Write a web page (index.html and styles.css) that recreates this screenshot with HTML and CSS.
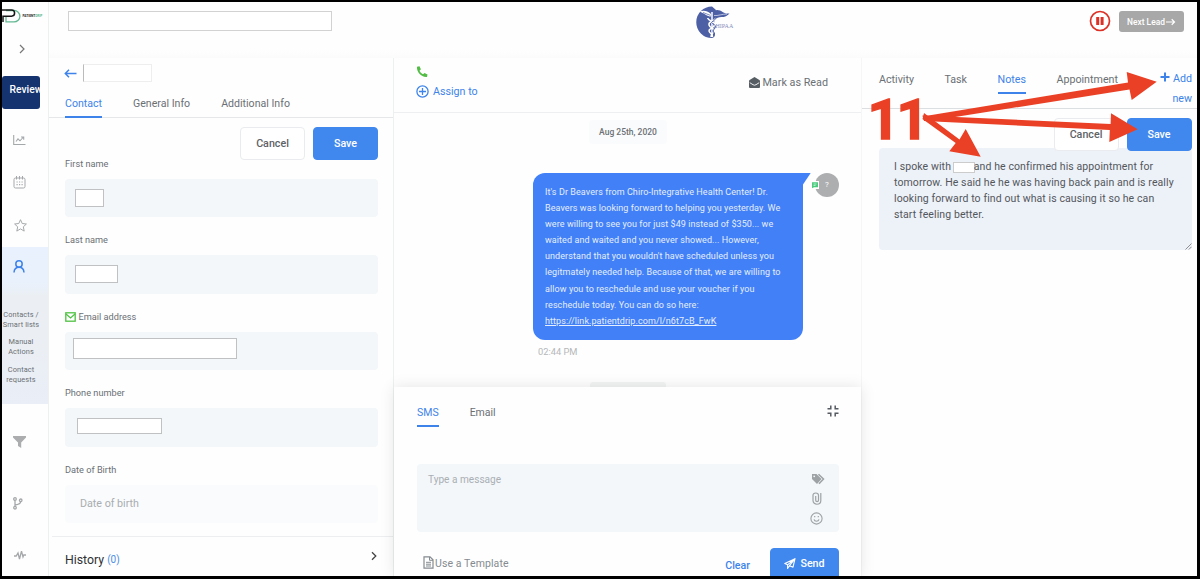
FILE: index.html
```html
<!DOCTYPE html>
<html lang="en">
<head>
<meta charset="utf-8">
<title>Contact conversation</title>
<link rel="stylesheet" href="styles.css">
</head>
<body>
<div class="window">
  <aside class="sidebar">
    <div class="brand">
      <svg width="41" height="16" viewBox="0 0 41 16"><path d="M4 2.500H12a5.900 5.700 0 0 1 0 11.400H4V8" fill="none" stroke="#63b892" stroke-width="1.300"/><path d="M0 2H9.500a3 3 0 0 1 0 6.200H1V14" fill="none" stroke="#161616" stroke-width="1.500"/><text class="brand-text" x="20.500" y="9.400">PATIENT<tspan fill="#58b58c">DRIP</tspan></text></svg>
    </div>
    <div class="nav expand"><svg width="8" height="10" viewBox="0 0 8 10"><path d="M2 1l4 4-4 4" fill="none" stroke="#777" stroke-width="1.200"/></svg></div>
    <div class="review">Review</div>
    <div class="nav chart"><svg width="13" height="11" viewBox="0 0 13 11" fill="none" stroke="#a5a8aa" stroke-width="1.100"><path d="M.7 0v9.500H12.500M3 6.500L5 3.800l2 2L10.500 2M8 2h2.700v2.700"/></svg></div>
    <div class="nav calendar"><svg width="13" height="13" viewBox="0 0 13 13" fill="none" stroke="#a5a8aa" stroke-width="1"><rect x="1" y="2" width="11" height="10" rx="1.500"/><path d="M3.500 0v3.500M6.500 0v3.500M9.500 0v3.500"/><path d="M3.500 6h6.500M3.500 8.700h6.500" stroke-dasharray="1.200 1.300" stroke-width="1.200"/></svg></div>
    <div class="nav star"><svg width="13" height="13" viewBox="0 0 13 13"><path d="M6.500 .7l1.700 3.800 4.200.5-3.100 2.800.9 4.300-3.700-2.200-3.700 2.200.9-4.300L.6 5l4.200-.5z" fill="none" stroke="#a5a8aa" stroke-linejoin="round"/></svg></div>
    <div class="section">
      <svg class="person" width="12" height="13" viewBox="0 0 12 13" fill="none" stroke="#3d83ea" stroke-width="1.500"><circle cx="6" cy="4" r="3.200"/><path d="M1 12.500C1.200 9.500 3 7.300 6 7.300s4.800 2.200 5 5.200"/></svg>
      <a>Contacts /<br>Smart lists</a>
      <a>Manual<br>Actions</a>
      <a>Contact<br>requests</a>
    </div>
    <div class="nav funnel"><svg width="13" height="12" viewBox="0 0 13 12"><path d="M0 0h13v1.500L8.200 6.500V12L5 10V6.500L0 1.500z" fill="#abadaf"/></svg></div>
    <div class="nav branch"><svg width="10" height="13" viewBox="0 0 10 13" fill="none" stroke="#a5a8aa" stroke-width="1.300"><circle cx="2" cy="2" r="1.300"/><circle cx="2" cy="10.700" r="1.300"/><circle cx="7.700" cy="3.300" r="1.300"/><path d="M2 3.500v6M7.700 4.800c0 2.200-2 2.700-5.700 3.200"/></svg></div>
    <div class="nav pulse"><svg width="12" height="11" viewBox="0 0 12 11"><path d="M0 6h2.200L4 3l1.500 6L7.500 1.200 9 7l.8-2H12" fill="none" stroke="#a5a8aa" stroke-width="1.300"/></svg></div>
  </aside>

  <div class="main">
    <header class="topbar">
      <div class="blank search"></div>
      <svg class="hipaa" width="40" height="33" viewBox="0 0 40 33"><path d="M16 .5A15.700 15.700 0 0 0 16 32c2-.3 3-1.500 3-4l-1-17 2-7z" fill="#4d5fa5"/><path d="M16 7c3-4 7-3.500 11-.8 2 1.300 4 1.500 6.500 1.200-2 2.500-5 3.600-8 3.600-3 .2-5 1-7 3z" fill="#4d5fa5"/><path d="M15 8C11 4.500 7 3.800 3.500 5.800c3 .3 4.500 3 11 5" fill="#fff"/><path d="M7 6.500l7 2.700" stroke="#4d5fa5" stroke-width=".7"/><path d="M16 6v25" stroke="#fff" stroke-width="1.500"/><path d="M11.500 12c2 4 8 3 7 7s-6 3-5.500 6 4 2 3.500 6M20 12c-2 4-8 3-7 7s6 3 5.500 6-4 2-3.500 6" fill="none" stroke="#fff" stroke-width="1.500"/><path d="M20 12c-1.500 3-4.500 3.500-4.500 4.500 1.500 2 4.500 2 4 4.500s-3 2.500-2.500 4 1.500 2 .5 4" fill="none" stroke="#4d5fa5" stroke-width=".9"/><path d="M18 9.500c4 .5 8-1.500 13-1.500" stroke="#fff" stroke-width=".6" fill="none"/><text class="hipaa-text" x="19.500" y="21.500">HIPAA</text></svg>
      <svg class="pause" width="22" height="22" viewBox="0 0 22 22"><circle cx="11" cy="11" r="9.500" fill="#fff" stroke="#dc3127" stroke-width="1.700"/><path d="M8.700 7v8M13.100 7v8" stroke="#dc3127" stroke-width="3"/></svg>
      <button class="next">Next Lead<svg width="10" height="8" viewBox="0 0 10 8"><path d="M0 4h8M5.700 1.300L8.500 4 5.700 6.700" fill="none" stroke="#fff" stroke-width="1.200"/></svg></button>
    </header>

    <div class="columns">
      <section class="contact">
        <div class="contact-head">
          <svg width="13" height="9" viewBox="0 0 13 9"><path d="M12.500 4.500H1.500M5 .8L1.300 4.500 5 8.200" fill="none" stroke="#3d83ea" stroke-width="1.500"/></svg>
          <div class="blank name"></div>
        </div>
        <nav class="tabs contact-tabs"><a class="on">Contact</a><a>General Info</a><a>Additional Info</a></nav>
        <div class="actions"><button class="btn">Cancel</button><button class="btn primary">Save</button></div>
        <div class="form">
          <label>First name</label><div class="field"><div class="blank b1"></div></div>
          <label>Last name</label><div class="field"><div class="blank b2"></div></div>
          <label><svg width="11" height="10" viewBox="0 0 11 10"><rect x=".8" y=".8" width="9.400" height="8.400" fill="none" stroke="#50c143" stroke-width="1.300"/><path d="M1 2l4.500 4L10 2" fill="none" stroke="#50c143" stroke-width="1.300"/></svg>Email address</label><div class="field"><div class="blank b3"></div></div>
          <label>Phone number</label><div class="field"><div class="blank b4"></div></div>
          <label>Date of Birth</label><div class="field pale">Date of birth</div>
        </div>
        <div class="history"><span>History</span><em>(0)</em><svg width="6" height="10" viewBox="0 0 6 10"><path d="M1 1.200L4.800 5 1 8.800" fill="none" stroke="#444" stroke-width="1.300"/></svg></div>
      </section>

      <section class="thread">
        <div class="thread-head">
          <div class="assign">
            <svg width="12" height="12" viewBox="0 0 12 12"><path d="M1 .8L3.500.3 4.900 3.300 3.500 4.800C4.200 6.300 5.300 7.500 7 8.300l1.500-1.400 3 1.500-.5 2.500C5.500 11.500.5 6.500 1 .8z" fill="#52bd45"/></svg>
            <a><svg width="13" height="13" viewBox="0 0 13 13" fill="none" stroke="#3d83ea" stroke-width="1.300"><circle cx="6.500" cy="6.500" r="5.600"/><path d="M6.500 3v7M3 6.500h7"/></svg><span>Assign to</span></a>
          </div>
          <div class="mark"><svg width="11" height="11" viewBox="0 0 11 11"><path d="M0 4.200Q0 3.500.6 3L5.500 0l4.900 3q.6.500.6 1.200V10q0 1-1 1H1q-1 0-1-1z" fill="#565d63"/><path d="M.8 5.700l3.200 2q1.500 1 3 0l3.200-2" fill="none" stroke="#fff" stroke-width=".9"/></svg><span>Mark as Read</span></div>
        </div>
        <div class="messages">
          <div class="chip">Aug 25th, 2020</div>
          <div class="row">
            <div class="bubble">It's Dr Beavers from Chiro-Integrative Health Center! Dr.<br>Beavers was looking forward to helping you yesterday. We<br>were willing to see you for just $49 instead of $350... we<br>waited and waited and you never showed... However,<br>understand that you wouldn't have scheduled unless you<br>legitmately needed help. Because of that, we are willing to<br>allow you to reschedule and use your voucher if you<br>reschedule today. You can do so here:<br><u>https://link.patientdrip.com/l/n6t7cB_FwK</u></div>
            <svg class="tail" width="8" height="12" viewBox="0 0 8 12"><path d="M0 0h7.700L0 11.500z" fill="#4180f7"/></svg>
            <div class="avatar">?<svg class="badge" width="8" height="8" viewBox="0 0 8 8"><path d="M0 0h8v8H0z" fill="#fff"/><path d="M1 1.200h6v5H3L1 7.300z" fill="#4bcb7d"/><path d="M2.500 3h3M2.500 4.500h2" stroke="#fff" stroke-width=".6"/></svg></div>
          </div>
          <div class="time">02:44 PM</div>
          <div class="next-chip"></div>
        </div>
        <div class="composer">
          <div class="composer-top"><nav class="tabs composer-tabs"><a class="on">SMS</a><a>Email</a></nav>
          <svg width="12" height="12" viewBox="0 0 12 12"><path d="M.5 3.800h3.300V.5M8.200.5v3.300h3.300M.5 8.200h3.300v3.300M8.200 11.500V8.200h3.300" fill="none" stroke="#555b60" stroke-width="1.500"/></svg></div>
          <div class="entry"><span>Type a message</span>
            <div class="tools">
              <svg width="14" height="12" viewBox="0 0 14 12"><path d="M1 1h4.500l5 5-4.500 5-5-5z" fill="#9da2a5"/><circle cx="3.200" cy="3.300" r=".9" fill="#f3f7fa"/><path d="M7.500 1.200l5 4.800L8 10.800" fill="none" stroke="#9da2a5" stroke-width="1.500"/></svg>
              <svg class="clip" width="10" height="13" viewBox="0 0 10 13"><path d="M8.800 1v7.500c0 5-7.800 5-7.800 0V3.300C1 .2 6.500.2 6.500 3.300v5c0 1.800-2.800 1.800-2.800 0V4" fill="none" stroke="#9da2a5" stroke-width="1.200"/></svg>
              <svg class="smile" width="13" height="13" viewBox="0 0 13 13" fill="none" stroke="#9da2a5" stroke-width="1.100"><circle cx="6.500" cy="6.500" r="5.600"/><path d="M4 7.300c.6 2.500 4.400 2.500 5 0"/><path d="M4.700 4v1.300M8.300 4v1.300" stroke-width="1.200"/></svg>
            </div>
          </div>
          <div class="composer-foot">
            <div class="template"><svg width="11" height="13" viewBox="0 0 11 13" fill="none" stroke="#858b90" stroke-width="1.200"><path d="M1 .8h6l3 3v8.400H1z"/><path d="M6.500 1v3.300H10M3 6.300h5M3 8.200h5M3 10h5" stroke-width="1"/></svg><span>Use a Template</span></div>
            <a class="clear">Clear</a>
            <button class="btn primary send"><svg width="12" height="11" viewBox="0 0 12 11"><path d="M11 .7L.8 5.500l2.800 1.300L11 .7 9 9.200 5 7.500M3.600 6.800v3.700L5.500 7.700 11 .7" fill="none" stroke="#fff" stroke-width="1.100" stroke-linejoin="round"/></svg><span>Send</span></button>
          </div>
        </div>
      </section>

      <section class="notes">
        <div class="notes-head">
          <nav class="tabs notes-tabs"><a>Activity</a><a>Task</a><a class="on">Notes</a><a>Appointment</a></nav>
          <a class="add"><svg width="10" height="10" viewBox="0 0 10 10"><path d="M5 .5v9M.5 5h9" stroke="#3d83ea" stroke-width="2"/></svg> Add<br>new</a>
        </div>
        <div class="actions note-actions"><button class="btn">Cancel</button><button class="btn primary">Save</button></div>
        <div class="note">I spoke with <i class="blank inline"></i>and he confirmed his appointment for<br>tomorrow. He said he he was having back pain and is really<br>looking forward to find out what is causing it so he can<br>start feeling better.<svg class="grip" width="7" height="7" viewBox="0 0 7 7"><path d="M.5 6.500l6-6M3.800 6.500l2.700-2.700" stroke="#777" stroke-width=".8"/></svg></div>
      </section>
    </div>
  </div>
</div>
<svg class="callout" width="300" height="100" viewBox="865 65 300 100">
  <text class="step" x="867.500" y="138.800">11</text>
  <g fill="#ea4025"><path d="M922.500 116.500L1128 82.500l-1.300-10.500 30 9.700-25 18.300-2.200-10.500L930 121z"/><path d="M922.500 115.500l188.100 8.500.4-10.700 26.700 16-28.400 12.700.5-12L924 121z"/><path d="M924 113l35.500 26.500 6.200-10.500 15 27.700-31.400-5.400 6.400-8.300L922.500 119z"/></g>
</svg>
</body>
</html>
```

FILE: styles.css
```css
* { box-sizing: border-box; }
body { margin: 0; width: 1200px; height: 579px; padding: 2px 3px 3px 2px; overflow: hidden; background: #000; color: #6b7075; font: 11px/14px Roboto, sans-serif; position: relative; }
svg { display: block; flex: none; }
button { font-family: inherit; padding: 0; border: 0; }
.window { display: flex; width: 1195px; height: 574px; overflow: hidden; background: #fefefe; }
.blank { background: #fff; border: 1px solid #bfc1c3; }

.sidebar { width: 47px; flex: none; border-right: 1px solid #eeeff1; display: flex; flex-direction: column; }
.brand { height: 31px; padding-top: 6px; flex: none; }
.brand-text { font: 700 3.200px Roboto, sans-serif; fill: #222; }
.nav { display: flex; align-items: center; justify-content: center; padding-right: 11px; flex: none; }
.expand { height: 32px; padding-right: 7px; }
.review { width: 38px; height: 33px; margin-top: 11px; padding-left: 7.500px; line-height: 28px; background: #14336f; color: #fff; font-size: 10.300px; font-weight: 500; border-radius: 3px; overflow: hidden; white-space: nowrap; flex: none; }
.chart { height: 62px; }
.calendar { height: 23px; }
.star { height: 63px; padding-right: 9px; }
.section { height: 157px; margin-top: -10px; padding-top: 13px; flex: none; background: linear-gradient(#e8f1fd 0, #e9f1fc 35px, #ebeff3 50px, #ebeff4 100px, #e9eef7); font-size: 7.400px; line-height: 10px; text-align: center; }
.section a { display: block; width: 38px; margin-bottom: 7.500px; white-space: nowrap; letter-spacing: .1px; }
.person { margin: 0 0 36.500px 11px; }
.funnel { height: 76px; }
.branch { height: 47px; padding-right: 14px; }
.pulse { height: 57px; }

.main { flex: 1; display: flex; flex-direction: column; min-width: 0; }
.topbar { height: 56px; flex: none; display: flex; align-items: flex-start; padding: 0 13px 0 19px; background: linear-gradient(#fefefe 48px, #fbfbfb); }
.search { width: 264px; height: 20px; margin-top: 9px; border-color: #d2d2d2; }
.hipaa { margin: 4px 0 0 364px; }
.hipaa-text { font: 6px "Liberation Serif", serif; fill: #8790bd; }
.pause { margin: 8px 8px 0 auto; }
.next { width: 65px; height: 21px; margin-top: 9px; background: #a8a8a8; color: #fff; border-radius: 3px; display: flex; align-items: center; justify-content: center; gap: 1px; font-size: 8.400px; font-weight: 500; }
.columns { flex: 1; display: flex; min-height: 0; }
.tabs { display: flex; white-space: nowrap; }
.tabs a { border-bottom: 2px solid transparent; }
.tabs .on { color: #3d83ea; border-color: #3d83ea; }

.contact { width: 345px; flex: none; display: flex; flex-direction: column; border-right: 1px solid #eeeff0; }
.contact-head { display: flex; align-items: center; gap: 6px; padding: 5px 0 0 15px; height: 25px; }
.name { width: 69px; height: 18px; border-color: #eee #eee #eee #bbb; }
.contact-tabs { gap: 31px; padding: 13px 0 0 16px; height: 35px; border-bottom: 1px solid #e5e7e9; }
.contact-tabs a { height: 22px; font-size: 10.600px; line-height: 15px; }
.actions { display: flex; gap: 8px; justify-content: flex-end; }
.contact .actions { padding: 9px 15px 0 0; }
.btn { width: 65px; height: 33px; border: 1px solid #e9ebee; border-radius: 4px; background: #fff; color: #5e6266; font: 500 10.700px Roboto, sans-serif; letter-spacing: 0; }
.primary { background: #4188ee; border-color: #4188ee; color: #fff; }
.form { padding: 0 15px 0 16px; margin-top: -3px; height: 379px; }
label { display: flex; align-items: center; height: 14px; gap: 2.500px; font-size: 9.200px; }
.field { height: 38.400px; margin: 8px 0 16px; padding: 10px; background: #f3f7fa; border-radius: 4px; }
.pale { background: #fafbfc; color: #a9adb1; padding: 12px 15px; font-size: 10.700px; }
.b1 { width: 29px; height: 18px; }
.b2 { width: 43px; height: 18px; }
.b3 { width: 164px; height: 21px; margin: -4px 0 0 -2px; }
.b4 { width: 85px; height: 16px; margin-left: 2px; }
.history { flex: 1; display: flex; align-items: center; margin-left: 3px; padding: 6px 16px 0 13px; border-top: 1px solid #eceef0; color: #303133; font-size: 12.300px; }
.history em { font-style: normal; color: #4b8de4; font-size: 10px; margin-left: 3px; }
.history svg { margin: -8px 0 0 auto; }

.thread { width: 468px; flex: none; display: flex; flex-direction: column; position: relative; border-right: 1px solid #f6f6f6; }
.thread-head { height: 55px; flex: none; display: flex; justify-content: space-between; border-bottom: 1px solid #eeeff1; padding: 8px 33px 0 22px; }
.assign a { display: flex; align-items: center; gap: 4px; margin-top: 5px; color: #3d83ea; font-size: 10.700px; line-height: 15px; }
.assign span { padding-top: 1px; }
.mark { display: flex; align-items: center; gap: 2px; height: 33px; font-size: 10.800px; }
.mark svg { margin-top: -1px; }
.messages { flex: 1; min-height: 0; padding-top: 7px; }
.chip { width: 78px; height: 24px; margin-left: 195px; line-height: 25px; text-align: center; background: #fafbfc; border-radius: 4px; font-size: 8.500px; font-weight: 500; }
.row { display: flex; margin: 29px 0 0 139px; }
.bubble { width: 270px; height: 167px; padding: 11px 12px; border-radius: 12px 0 12px 12px; background: #4180f7; color: #e5eeff; font-size: 9px; line-height: 16.100px; letter-spacing: .08px; white-space: nowrap; }
.avatar { position: relative; width: 24px; height: 24px; margin-left: 4px; border-radius: 50%; background: #acaeb0; color: #fff; font-size: 8px; line-height: 24px; text-align: center; }
.badge { position: absolute; left: -4px; top: 8px; }
.time { margin: 5px 0 0 144px; font-size: 9.300px; color: #b5b8ba; }
.next-chip { width: 76px; height: 5px; margin: 23px 0 0 196px; background: #f3f4f4; border-radius: 3px 3px 0 0; }
.composer { position: relative; height: 189px; flex: none; background: #fefefe; padding: 18px 22px 0 23px; box-shadow: 0 0 14px rgba(0,0,0,.1); }
.composer-top { display: flex; justify-content: space-between; }
.composer-tabs { gap: 31px; font-size: 10.500px; }
.composer-tabs a { height: 22px; line-height: 15px; }
.entry { display: flex; justify-content: space-between; height: 68px; margin-top: 37px; padding: 8px 13px 0 11px; background: #f3f7fa; border-radius: 4px; color: #aaafb4; font-size: 10.100px; line-height: 15px; }
.tools { display: flex; flex-direction: column; align-items: center; gap: 7px; padding-top: 1px; }
.clip, .smile { margin-right: 3px; }
.composer-foot { display: flex; margin-top: 16px; }
.template { display: flex; align-items: center; height: 31px; padding-left: 6px; gap: 1px; color: #858b90; font-size: 10.500px; letter-spacing: .1px; }
.template svg { margin-top: -3px; }
.clear { margin: 11px 20px 0 auto; color: #3d83ea; font-weight: 500; font-size: 10.600px; }
.send { width: 69px; display: flex; gap: 4px; align-items: center; justify-content: center; padding-bottom: 3px; }

.notes { flex: 1; position: relative; z-index: 0; }
.notes-head { height: 51px; display: flex; justify-content: space-between; border-bottom: 1px solid #dcdfe2; padding: 14px 5px 0 17px; }
.notes-tabs { gap: 30.500px; font-size: 10.700px; }
.notes-tabs a { height: 22px; line-height: 15px; }
.add { color: #3d83ea; font-size: 10.700px; line-height: 19.500px; text-align: right; margin-top: -3px; white-space: nowrap; }
.add svg { display: inline-block; }
.note-actions { position: relative; padding: 9px 5.500px 0 0; }
.note { position: relative; height: 102px; margin: -3px 5px 0 17px; padding: 11px 15px; z-index: -1; background: #edf1f8; border-radius: 4px; color: #53575c; line-height: 16px; font-size: 10.500px; letter-spacing: .1px; white-space: nowrap; }
.inline { display: inline-block; width: 22px; height: 11px; margin: 0 -1px; vertical-align: -3px; border-color: #ccc; }
.grip { position: absolute; right: 0; bottom: 0; }
.callout { position: absolute; left: 865px; top: 65px; z-index: 3; }
.step { font: 700 56px Roboto, sans-serif; fill: #ea4025; stroke: #ea4025; stroke-width: 1.400px; letter-spacing: -3.200px; }
```
